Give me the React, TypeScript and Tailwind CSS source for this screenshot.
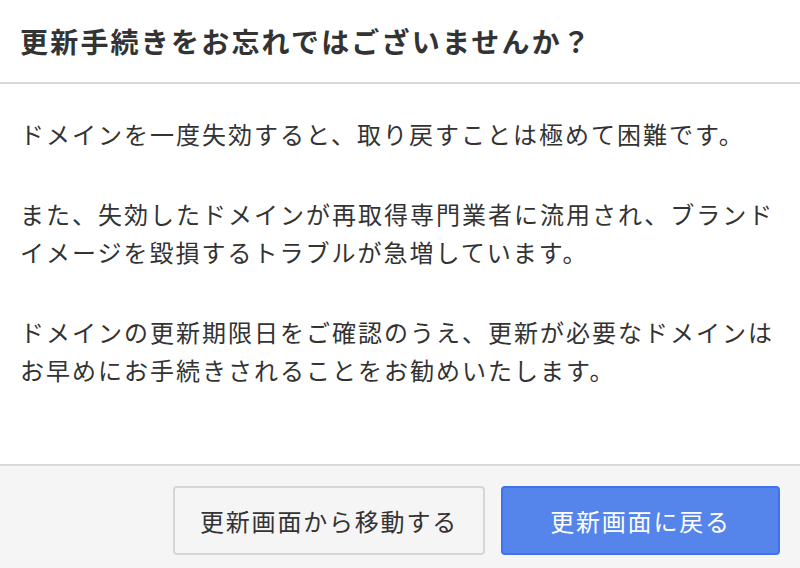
const font = { fontFamily: '"Hiragino Sans", "Noto Sans CJK JP", sans-serif' };

export default function App() {
  return (
    <div className="w-[800px] h-[568px] overflow-hidden bg-white text-[#333]" style={font}>
      <div className="h-[84px] flex items-center px-5 border-b-2 border-[#d8d8d8]">
        <h1 className="text-[28px] font-bold tracking-[2.2px] leading-none">
          更新手続きをお忘れではございませんか？
        </h1>
      </div>
      <div className="h-[380px] pt-[31px] px-5 text-[24px] leading-[38px] tracking-[2px]">
        <p className="mb-[42px]">ドメインを一度失効すると、取り戻すことは極めて困難です。</p>
        <p className="mb-[42px]">
          また、失効したドメインが再取得専門業者に流用され、ブランド
          <br />
          イメージを毀損するトラブルが急増しています。
        </p>
        <p>
          ドメインの更新期限日をご確認のうえ、更新が必要なドメインは
          <br />
          お早めにお手続きされることをお勧めいたします。
        </p>
      </div>
      <div className="border-t-2 border-[#d8d8d8] bg-[#f5f5f5] flex justify-end gap-4 px-5 pt-5 pb-5">
        <button className="w-[312px] h-[69px] rounded border-2 border-[#d6d6d6] bg-[#f5f5f5] text-[24px] tracking-[1.8px] text-[#333]">
          更新画面から移動する
        </button>
        <button className="w-[279px] h-[69px] rounded border-2 border-[#3f72ec] bg-[#5585ea] text-[24px] tracking-[1.8px] text-white">
          更新画面に戻る
        </button>
      </div>
    </div>
  );
}
